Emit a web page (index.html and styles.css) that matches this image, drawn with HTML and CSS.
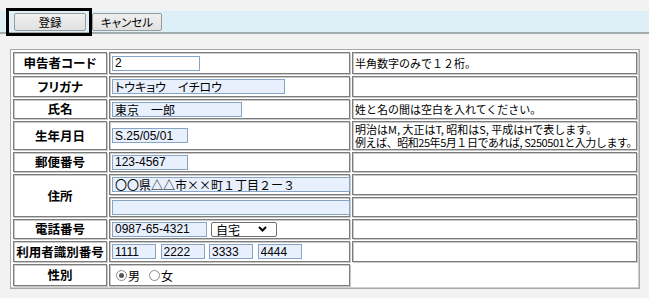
FILE: index.html
```html
<!DOCTYPE html>
<html lang="ja">
<head>
<meta charset="utf-8">
<link rel="stylesheet" href="styles.css">
</head>
<body>
<div class="toolbar">
  <button class="btn btn-save" type="button">登録</button>
  <button class="btn btn-cancel" type="button">キャンセル</button>
</div>
<div class="highlight"></div>
<table class="form">
  <colgroup>
    <col class="c-label">
    <col class="c-field">
    <col class="c-note">
  </colgroup>
  <tr class="h22">
    <td class="label">申告者コード</td>
    <td class="field"><input class="in w-code white" value="2"></td>
    <td class="note">半角数字のみで１２桁。</td>
  </tr>
  <tr class="h21">
    <td class="label">フリガナ</td>
    <td class="field"><input class="in w-kana" value="トウキョウ　イチロウ"></td>
    <td class="note"></td>
  </tr>
  <tr class="h20">
    <td class="label">氏名</td>
    <td class="field"><input class="in w-name" value="東京　一郎"></td>
    <td class="note">姓と名の間は空白を入れてください。</td>
  </tr>
  <tr class="h29">
    <td class="label">生年月日</td>
    <td class="field"><input class="in w-date" value="S.25/05/01"></td>
    <td class="note two"><span class="l1">明治はM, 大正はT, 昭和はS, 平成はHで表します。</span><br><span class="l2">例えば、昭和25年5月１日であれば, S250501と入力します。</span></td>
  </tr>
  <tr class="h20">
    <td class="label">郵便番号</td>
    <td class="field"><input class="in w-date" value="123-4567"></td>
    <td class="note"></td>
  </tr>
  <tr class="h21">
    <td class="label" rowspan="2">住所</td>
    <td class="field"><input class="in jp w-addr" value="〇〇県△△市××町１丁目２ー３"></td>
    <td class="note"></td>
  </tr>
  <tr class="h20">
    <td class="field"><input class="in w-addr" value=""></td>
    <td class="note"></td>
  </tr>
  <tr class="h20">
    <td class="label">電話番号</td>
    <td class="field"><input class="in w-tel" value="0987-65-4321"><span class="select">自宅<svg class="chev" width="9" height="6" viewBox="0 0 9 6"><polyline points="1,1 4.5,4.5 8,1" fill="none" stroke="#000" stroke-width="2"/></svg></span></td>
    <td class="note"></td>
  </tr>
  <tr class="h21">
    <td class="label">利用者識別番号</td>
    <td class="field"><input class="in w-id" value="1111"><input class="in w-id" value="2222"><input class="in w-id" value="3333"><input class="in w-id" value="4444"></td>
    <td class="note"></td>
  </tr>
  <tr class="h22">
    <td class="label">性別</td>
    <td class="field"><span class="radio on"></span><span class="rlabel">男</span><span class="radio"></span><span class="rlabel">女</span></td>
  </tr>
</table>
</body>
</html>
```
FILE: styles.css
```css
html, body {
  margin: 0;
  padding: 0;
  background: #f2f2f2;
  font-family: "Liberation Sans", "Noto Sans CJK JP", sans-serif;
  font-size: 12px;
  color: #000;
}
.toolbar {
  margin-top: 11px;
  height: 23px;
  box-sizing: border-box;
  padding: 2px 0 0 14px;
  background: #ddf0f8;
  border-bottom: 2px solid #a3adb0;
  display: flex;
  gap: 6px;
  align-items: flex-start;
}
.btn {
  height: 18px;
  margin: 0;
  padding: 0;
  box-sizing: border-box;
  border: 1px solid #9a9a9a;
  border-radius: 2px;
  background: linear-gradient(#f0f0f0, #e1e1e1);
  font-family: "Noto Sans CJK JP", sans-serif;
  font-size: 11.5px;
  line-height: 15px;
  color: #000;
}
.btn-save { width: 72px; }
.btn-cancel { width: 70px; font-feature-settings: "palt"; }
.highlight {
  position: absolute;
  left: 6px;
  top: 8px;
  width: 86px;
  height: 28px;
  box-sizing: border-box;
  border: 3px solid #000;
}
.form {
  margin: 15px 0 0 10px;
  width: 630px;
  table-layout: fixed;
  border-collapse: separate;
  border-spacing: 2px;
  border: 1px solid #a8a8a8;
  box-shadow: inset -1px -1px 0 #cfcfcf;
  background: #fff;
}
.c-label { width: 94px; }
.c-field { width: 241px; }
.c-note { width: 285px; }
.h20 { height: 20px; }
.h21 { height: 21px; }
.h22 { height: 22px; }
.h29 { height: 29px; }
.form td {
  border: 1px solid #7c7c7c;
  box-shadow: inset 1px 1px 0 #c9c9c9, 1px 1px 0 #c9c9c9;
  padding: 0;
  vertical-align: middle;
}
.label {
  text-align: center;
  font-family: "Noto Sans CJK JP", sans-serif;
  font-weight: bold;
  font-size: 12.5px;
  font-feature-settings: "palt";
  line-height: 14px;
  white-space: nowrap;
}
.field {
  padding-left: 2px !important;
  white-space: nowrap;
  font-size: 0;
}
.note {
  padding-left: 2px !important;
  font-family: "Noto Sans CJK JP", sans-serif;
  font-size: 11px;
  line-height: 12px;
  white-space: nowrap;
  overflow: hidden;
}
.note.two { line-height: 13px; }
.l2 { letter-spacing: -0.45px; }
.in {
  height: 15px;
  box-sizing: border-box;
  margin: 0 4px 0 0;
  padding: 0 2px;
  border: 1px solid #86a5c6;
  border-radius: 0;
  background: #e8f0fd;
  font-family: "Liberation Sans", "Noto Sans CJK JP", sans-serif;
  font-size: 12px;
  font-feature-settings: "palt";
  color: #000;
  vertical-align: middle;
  outline: none;
}
.in.jp { font-family: "Noto Sans CJK JP", sans-serif; font-feature-settings: normal; }
.in.white { background: #fff; }
.w-code { width: 88px; }
.w-kana { width: 173px; }
.w-name { width: 130px; }
.w-date { width: 76px; }
.w-addr { width: 238px; }
.w-tel { width: 95px; }
.w-id { width: 44px; margin-right: 4.5px; }
.select {
  display: inline-flex;
  align-items: center;
  justify-content: space-between;
  width: 66px;
  height: 15px;
  box-sizing: border-box;
  padding: 0 9px 0 4px;
  border: 1px solid #707070;
  border-radius: 2px;
  background: #fff;
  font-family: "Noto Sans CJK JP", sans-serif;
  font-size: 12px;
  line-height: 13px;
  vertical-align: middle;
}
.chev { display: block; }
.radio {
  display: inline-block;
  width: 11px;
  height: 11px;
  box-sizing: border-box;
  border: 1px solid #8a8a8a;
  border-radius: 50%;
  background: #fff;
  vertical-align: middle;
  margin-left: 4px;
  position: relative;
}
.radio + .rlabel + .radio { margin-left: 9px; }
.radio.on::after {
  content: "";
  position: absolute;
  left: 2px;
  top: 2px;
  width: 5px;
  height: 5px;
  border-radius: 50%;
  background: #555;
}
.rlabel {
  font-family: "Noto Sans CJK JP", sans-serif;
  font-size: 12px;
  vertical-align: middle;
  margin-left: 1px;
}
```
